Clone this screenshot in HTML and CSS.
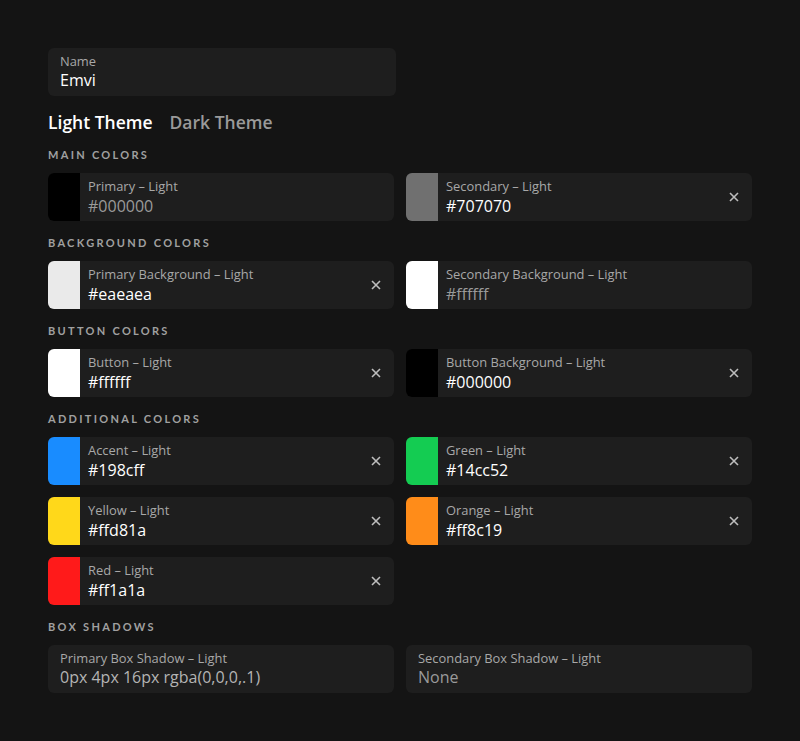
FILE: index.html
```html
<!DOCTYPE html>
<html>
<head>
<meta charset="utf-8">
<link rel="stylesheet" href="styles.css">
</head>
<body>
<div class="page">
  <div class="field name-field">
    <div class="label">Name</div>
    <div class="value">Emvi</div>
  </div>

  <div class="tabs">
    <span class="tab active">Light Theme</span>
    <span class="tab">Dark Theme</span>
  </div>

  <div class="section-title">Main Colors</div>
  <div class="grid">
    <div class="field color">
      <div class="swatch" style="background:#000000"></div>
      <div class="text"><div class="label">Primary – Light</div><div class="value placeholder">#000000</div></div>
    </div>
    <div class="field color">
      <div class="swatch" style="background:#707070"></div>
      <div class="text"><div class="label">Secondary – Light</div><div class="value">#707070</div></div>
      <svg class="close" viewBox="0 0 10 10"><path d="M1 1L9 9M9 1L1 9"/></svg>
    </div>
  </div>

  <div class="section-title">Background Colors</div>
  <div class="grid">
    <div class="field color">
      <div class="swatch" style="background:#eaeaea"></div>
      <div class="text"><div class="label">Primary Background – Light</div><div class="value">#eaeaea</div></div>
      <svg class="close" viewBox="0 0 10 10"><path d="M1 1L9 9M9 1L1 9"/></svg>
    </div>
    <div class="field color">
      <div class="swatch" style="background:#ffffff"></div>
      <div class="text"><div class="label">Secondary Background – Light</div><div class="value placeholder">#ffffff</div></div>
    </div>
  </div>

  <div class="section-title">Button Colors</div>
  <div class="grid">
    <div class="field color">
      <div class="swatch" style="background:#ffffff"></div>
      <div class="text"><div class="label">Button – Light</div><div class="value">#ffffff</div></div>
      <svg class="close" viewBox="0 0 10 10"><path d="M1 1L9 9M9 1L1 9"/></svg>
    </div>
    <div class="field color">
      <div class="swatch" style="background:#000000"></div>
      <div class="text"><div class="label">Button Background – Light</div><div class="value">#000000</div></div>
      <svg class="close" viewBox="0 0 10 10"><path d="M1 1L9 9M9 1L1 9"/></svg>
    </div>
  </div>

  <div class="section-title">Additional Colors</div>
  <div class="grid">
    <div class="field color">
      <div class="swatch" style="background:#198cff"></div>
      <div class="text"><div class="label">Accent – Light</div><div class="value">#198cff</div></div>
      <svg class="close" viewBox="0 0 10 10"><path d="M1 1L9 9M9 1L1 9"/></svg>
    </div>
    <div class="field color">
      <div class="swatch" style="background:#14cc52"></div>
      <div class="text"><div class="label">Green – Light</div><div class="value">#14cc52</div></div>
      <svg class="close" viewBox="0 0 10 10"><path d="M1 1L9 9M9 1L1 9"/></svg>
    </div>
    <div class="field color">
      <div class="swatch" style="background:#ffd81a"></div>
      <div class="text"><div class="label">Yellow – Light</div><div class="value">#ffd81a</div></div>
      <svg class="close" viewBox="0 0 10 10"><path d="M1 1L9 9M9 1L1 9"/></svg>
    </div>
    <div class="field color">
      <div class="swatch" style="background:#ff8c19"></div>
      <div class="text"><div class="label">Orange – Light</div><div class="value">#ff8c19</div></div>
      <svg class="close" viewBox="0 0 10 10"><path d="M1 1L9 9M9 1L1 9"/></svg>
    </div>
    <div class="field color">
      <div class="swatch" style="background:#ff1a1a"></div>
      <div class="text"><div class="label">Red – Light</div><div class="value">#ff1a1a</div></div>
      <svg class="close" viewBox="0 0 10 10"><path d="M1 1L9 9M9 1L1 9"/></svg>
    </div>
  </div>

  <div class="section-title">Box Shadows</div>
  <div class="grid">
    <div class="field plain">
      <div class="label">Primary Box Shadow – Light</div>
      <div class="value soft">0px 4px 16px rgba(0,0,0,.1)</div>
    </div>
    <div class="field plain">
      <div class="label">Secondary Box Shadow – Light</div>
      <div class="value placeholder">None</div>
    </div>
  </div>
</div>
</body>
</html>
```

FILE: styles.css
```css
* { box-sizing: border-box; }
html, body { margin: 0; padding: 0; }
body {
  background: #141414;
  font-family: "Open Sans", Lato, sans-serif;
  color: #fff;
  width: 800px;
  height: 741px;
}
.page {
  padding: 48px 48px 0 48px;
}
.field {
  background: #1e1e1e;
  border-radius: 6px;
  height: 48px;
  overflow: hidden;
}
.name-field {
  width: 348px;
  padding: 5px 12px;
}
.label {
  font-size: 12.9px;
  color: #a8a8a8;
  line-height: 16px;
  white-space: nowrap;
}
.value {
  font-size: 16px;
  font-weight: 500;
  color: #fff;
  line-height: 20px;
  margin-top: 1px;
  white-space: nowrap;
}
.value.placeholder { color: #9a9a9a; }
.value.soft { color: #b4b4b4; }
.tabs {
  display: flex;
  gap: 17px;
  margin-top: 16px;
  height: 20px;
  align-items: center;
}
.tab {
  font-size: 17.5px;
  font-weight: 600;
  color: #9a9a9a;
}
.tab.active { color: #fff; }
.section-title {
  font-family: Lato, sans-serif;
  font-size: 11px;
  font-weight: 700;
  letter-spacing: 2.3px;
  text-transform: uppercase;
  color: #a0a0a0;
  margin-top: 15px;
  height: 14px;
  line-height: 14px;
  margin-bottom: 11px;
}
.tabs + .section-title { margin-top: 16px; }
.grid {
  display: grid;
  grid-template-columns: 346px 346px;
  column-gap: 12px;
  row-gap: 12px;
}
.color {
  display: flex;
  align-items: center;
}
.swatch {
  width: 32px;
  height: 48px;
  flex: none;
}
.text {
  flex: 1;
  align-self: stretch;
  padding: 5px 8px;
}
.text .value { margin-top: 2px; }
.close {
  width: 10px;
  height: 10px;
  margin-right: 13px;
  flex: none;
}
.close path {
  stroke: #bdbdbd;
  stroke-width: 1.6;
  fill: none;
}
.plain {
  padding: 5px 12px;
}
```
